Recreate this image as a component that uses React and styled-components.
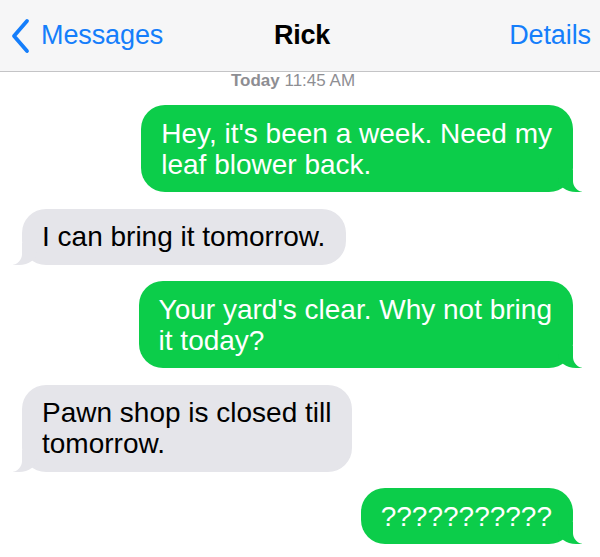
import styled, { createGlobalStyle, css } from "styled-components";

const GlobalStyle = createGlobalStyle`
    html, body {
        margin: 0;
        padding: 0;
        background: #ffffff;
    }
    body {
        font-family: "Liberation Sans", Arial, sans-serif;
        -webkit-font-smoothing: antialiased;
    }
`;

// Conversa com o Rick, cada mensagem com as linhas como aparecem na tela
const messages = [
    { from: "me", lines: ["Hey, it's been a week. Need my", "leaf blower back."] },
    { from: "them", lines: ["I can bring it tomorrow."] },
    { from: "me", lines: ["Your yard's clear. Why not bring", "it today?"] },
    { from: "them", lines: ["Pawn shop is closed till", "tomorrow."] },
    { from: "me", lines: ["???????????"] },
];

const ChevronLeft = () => (
    <svg width="22" height="36" viewBox="0 0 22 36" fill="none">
        <path d="M18 3 L5 18 L18 33" stroke="#157efb" strokeWidth="3.8" strokeLinecap="round" strokeLinejoin="round" />
    </svg>
);

const App = () => {
    return (
        <>
            <GlobalStyle />
            <Screen>
                <NavBar>
                    <BackButton>
                        <ChevronLeft />
                        <span>Messages</span>
                    </BackButton>
                    <Contact>Rick</Contact>
                    <NavLink>Details</NavLink>
                </NavBar>
                <Timestamp>
                    <strong>Today</strong> 11:45 AM
                </Timestamp>
                <Thread>
                    {messages.map((m, i) => (
                        <Bubble key={i} $sent={m.from === "me"}>
                            {m.lines.map((line, j) => (
                                <Line key={j}>{line}</Line>
                            ))}
                        </Bubble>
                    ))}
                </Thread>
            </Screen>
        </>
    );
};

const Screen = styled.div`
    width: 600px;
    height: 557px;
    overflow: hidden;
    background: #ffffff;
    display: flex;
    flex-direction: column;
`;

const NavBar = styled.div`
    height: 71px;
    flex-shrink: 0;
    display: grid;
    grid-template-columns: 1fr auto 1fr;
    align-items: center;
    padding: 0 9px 0 9px;
    background: #f6f6f7;
    border-bottom: 1px solid #c4c4c6;
    font-size: 27px;
`;

const BackButton = styled.div`
    display: flex;
    align-items: center;
    gap: 10px;
    color: #157efb;
    letter-spacing: -0.1px;
`;

const Contact = styled.div`
    color: #000000;
    font-weight: bold;
    letter-spacing: -0.3px;
    transform: translateX(2px);
`;

const NavLink = styled.div`
    justify-self: end;
    color: #157efb;
    letter-spacing: -0.1px;
`;

const Timestamp = styled.div`
    text-align: center;
    font-size: 17px;
    line-height: 18px;
    color: #8e8e93;
    margin-right: 14px;

    strong {
        font-weight: bold;
    }
`;

const Thread = styled.div`
    display: flex;
    flex-direction: column;
    gap: 16.5px;
    padding: 15px 27px 0 22px;
`;

const tail = (side, color) => css`
    &::before {
        content: "";
        position: absolute;
        bottom: 0;
        ${side}: -9px;
        width: 24px;
        height: 22px;
        background: ${color};
        border-bottom-${side === "right" ? "left" : "right"}-radius: 18px 14px;
        z-index: 0;
    }
    &::after {
        content: "";
        position: absolute;
        bottom: 0;
        ${side}: -15px;
        width: 15px;
        height: 24px;
        background: #ffffff;
        border-bottom-${side === "right" ? "left" : "right"}-radius: 11px;
        z-index: 1;
    }
`;

const Bubble = styled.div`
    position: relative;
    display: flex;
    flex-direction: column;
    padding: 12.5px 21px 12.5px 20px;
    border-radius: 24px;
    font-size: 28px;
    line-height: 31px;
    white-space: nowrap;
    align-self: ${({ $sent }) => ($sent ? "flex-end" : "flex-start")};
    background: ${({ $sent }) => ($sent ? "#0ccd4a" : "#e5e5ea")};
    color: ${({ $sent }) => ($sent ? "#ffffff" : "#000000")};
    ${({ $sent }) => ($sent ? tail("right", "#0ccd4a") : tail("left", "#e5e5ea"))}
`;

const Line = styled.span`
    position: relative;
    z-index: 2;
`;

export default App;
